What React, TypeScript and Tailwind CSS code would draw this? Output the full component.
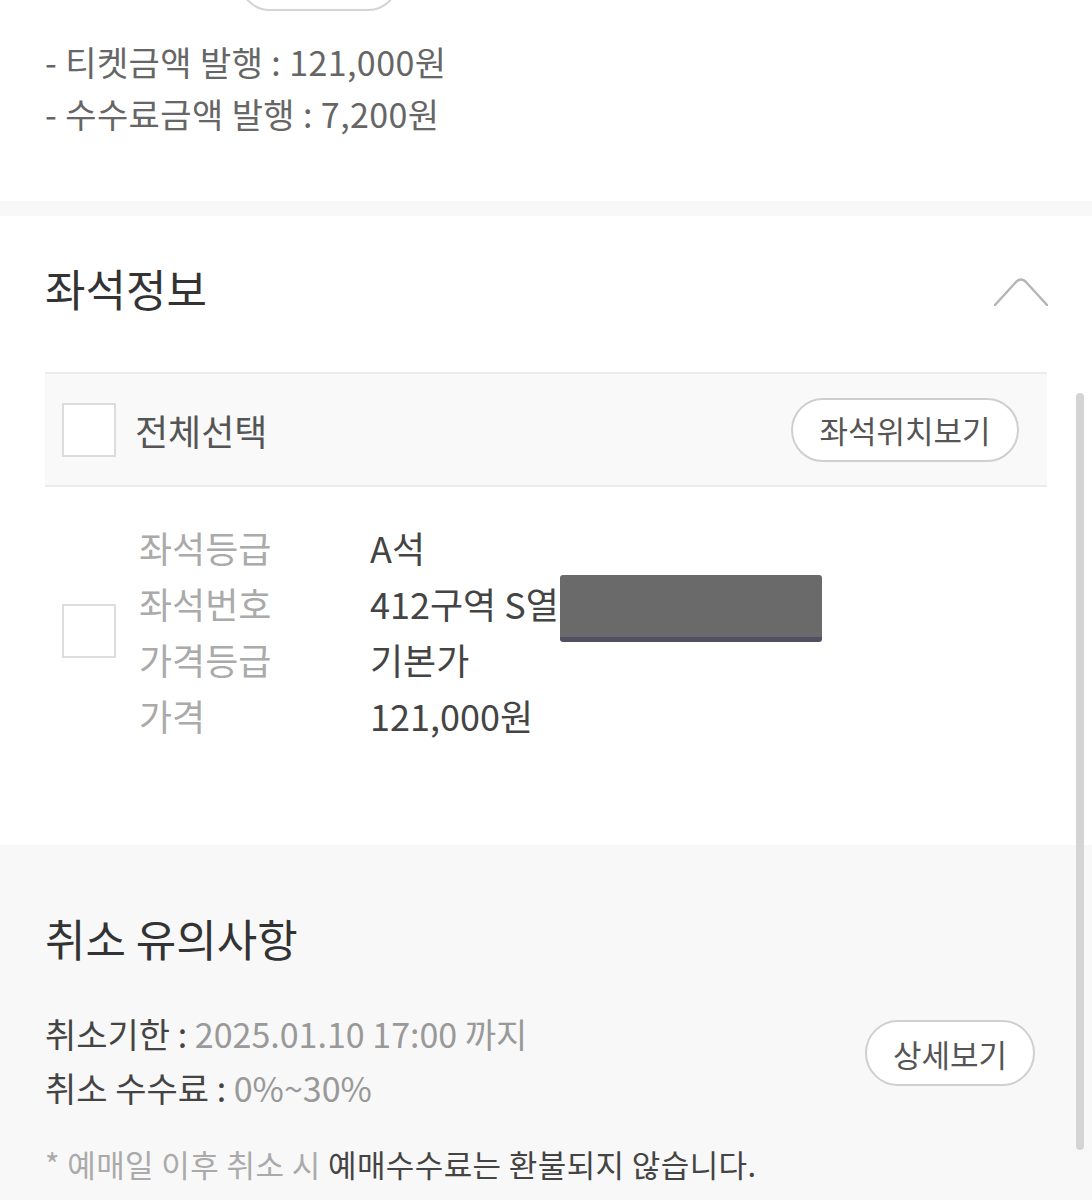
import { ReactNode } from "react"

const font = { fontFamily: '"Noto Sans CJK KR", "Noto Sans", sans-serif' }

function Box() {
    return <div className="w-[54px] h-[54px] shrink-0 border-2 border-[#dcdcdc] bg-white" />
}

function Pill({ children, className = "" }: { children: ReactNode; className?: string }) {
    return (
        <button className={`rounded-full border-2 border-[#cfcfcf] bg-white text-[#555] leading-none flex items-center justify-center ${className}`}>
            {children}
        </button>
    )
}

const seat = [
    ["좌석등급", "A석"],
    ["좌석번호", "412구역 S열"],
    ["가격등급", "기본가"],
    ["가격", "121,000원"],
]

export default function App() {
    return (
        <div className="w-[1092px] h-[1200px] overflow-hidden bg-white relative" style={font}>
            {/* issue section, cut at top */}
            <div className="px-[45px] pb-[61px]">
                <div className="-mt-[52px] h-[64px] flex items-center gap-[28px]">
                    <span className="text-[36px] text-[#444]">현금영수증</span>
                    <div className="w-[160px] h-[62px] rounded-full border-2 border-[#d4d4d4]" />
                </div>
                <div className="mt-[24px] text-[34px] leading-[52px] text-[#666] tracking-[0.4px]">
                    <p>- 티켓금액 발행 : 121,000원</p>
                    <p>- 수수료금액 발행 : 7,200원</p>
                </div>
            </div>
            <div className="h-[15px] bg-[#f8f8f8]" />

            {/* seat info */}
            <div className="px-[45px] pt-[50px] pb-[102px]">
                <div className="flex items-center justify-between">
                    <h2 className="text-[44px] text-[#333] leading-none">좌석정보</h2>
                    <svg width="54" height="30" viewBox="0 0 54 30" fill="none" className="mr-[-1px] mt-[6px]">
                        <path d="M1 29 L22 6 Q27 1 32 6 L53 29" stroke="#b5b5b5" strokeWidth="2.5" strokeLinecap="round" />
                    </svg>
                </div>

                <div className="mt-[62px] border-t-2 border-b-2 border-[#ececec] bg-[#f9f9f9] h-[115px] flex items-center pl-[17px] pr-[28px]">
                    <Box />
                    <span className="ml-[19px] text-[36px] text-[#555]">전체선택</span>
                    <Pill className="ml-auto w-[228px] h-[64px] text-[31px]">좌석위치보기</Pill>
                </div>

                <div className="mt-[32px] flex items-center pl-[17px]">
                    <Box />
                    <div className="ml-[23px] grid grid-cols-[231px_1fr] text-[36px] leading-[56px]">
                        {seat.map(([k, v]) => (
                            <>
                                <span key={k} className="text-[#aaa]">{k}</span>
                                <span key={k + "v"} className="text-[#444] relative">
                                    {v}
                                    {k === "좌석번호" && (
                                        <span className="absolute left-[190px] top-[0px] w-[262px] h-[67px] rounded-[3px] bg-[#6a6a6a] border-b-[5px] border-[#505060]" />
                                    )}
                                </span>
                            </>
                        ))}
                    </div>
                </div>
            </div>

            {/* cancel notes */}
            <div className="bg-[#f8f8f8] px-[45px] pt-[71px] pb-[40px] h-full">
                <h2 className="text-[44px] text-[#333] leading-none">취소 유의사항</h2>
                <div className="mt-[47px] flex items-center pr-[12px]">
                    <div className="text-[34px] leading-[54px]">
                        <p><span className="text-[#444]">취소기한 : </span><span className="text-[#999]">2025.01.10 17:00 까지</span></p>
                        <p><span className="text-[#444]">취소 수수료 : </span><span className="text-[#999]">0%~30%</span></p>
                    </div>
                    <Pill className="ml-auto mb-[16px] w-[170px] h-[66px] text-[31px]">상세보기</Pill>
                </div>
                <p className="mt-[33px] text-[31px] leading-none tracking-[0.4px]">
                    <span className="text-[#aaa]">* 예매일 이후 취소 시 </span>
                    <span className="text-[#444]">예매수수료는 환불되지 않습니다.</span>
                </p>
            </div>

            {/* overlay scrollbar */}
            <div className="absolute left-[1076px] top-[393px] w-[8px] h-[757px] rounded-full bg-[#d4d4d4]" />
        </div>
    )
}
